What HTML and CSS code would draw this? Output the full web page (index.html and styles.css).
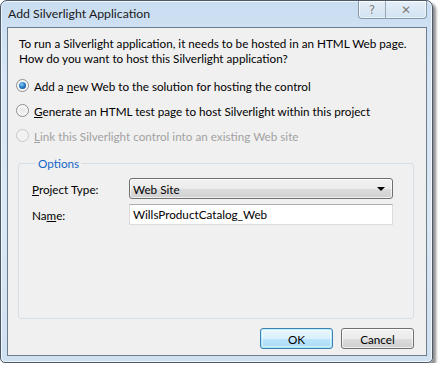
FILE: index.html
```html
<!DOCTYPE html>
<html>
<head>
<meta charset="utf-8">
<link rel="stylesheet" href="styles.css">
</head>
<body>
<div class="window">
  <div class="titlebar">
    <span class="title">Add Silverlight Application</span>
    <div class="caption-btns">
      <span class="cb help">?</span>
      <span class="cb close">✕</span>
    </div>
  </div>
  <div class="client">
    <p class="intro">To run a Silverlight application, it needs to be hosted in an HTML Web page.<br>How do you want to host this Silverlight application?</p>
    <div class="radios">
      <div class="radio checked"><span class="circle"><span class="dot"></span></span><span>Add a <u>n</u>ew Web to the solution for hosting the control</span></div>
      <div class="radio"><span class="circle"></span><span><u>G</u>enerate an HTML test page to host Silverlight within this project</span></div>
      <div class="radio disabled"><span class="circle"></span><span><u>L</u>ink this Silverlight control into an existing Web site</span></div>
    </div>
    <fieldset class="group">
      <legend>Options</legend>
      <div class="row">
        <span class="lbl"><u>P</u>roject Type:</span>
        <div class="combo"><span>Web Site</span><span class="arrow"></span></div>
      </div>
      <div class="row">
        <span class="lbl">Na<u>m</u>e:</span>
        <div class="textbox">WillsProductCatalog_Web</div>
      </div>
    </fieldset>
    <div class="buttons">
      <button class="btn default">OK</button>
      <button class="btn">Cancel</button>
    </div>
  </div>
</div>
</body>
</html>
```

FILE: styles.css
```css
html, body {
  margin: 0;
  padding: 0;
  background: #ffffff;
}
body {
  font-family: Lato, "Noto Sans", sans-serif;
  font-size: 11.7px;
  color: #000;
  white-space: nowrap;
}
.window {
  box-sizing: border-box;
  width: 433px;
  height: 363px;
  border: 1px solid #4a5868;
  border-radius: 7px 7px 5px 5px;
  background: linear-gradient(180deg, #c9ddf1 0%, #d6e6f6 20%, #dbe8f5 60%, #cfe0f1 100%);
  box-shadow: 3px 3px 3px rgba(0,0,0,0.45), inset 0 0 0 1px rgba(255,255,255,0.7);
  display: flex;
  flex-direction: column;
}
.titlebar {
  height: 26px;
  display: flex;
  align-items: flex-start;
  justify-content: space-between;
}
.title {
  padding: 5px 0 0 7px;
  line-height: 16px;
  font-size: 12.3px;
  color: #1a1a1a;
}
.caption-btns {
  display: flex;
  margin-right: 5px;
  height: 17px;
  border: 1px solid #8a99a8;
  border-top: none;
  border-radius: 0 0 4px 4px;
  background: linear-gradient(180deg, rgba(255,255,255,0.5), rgba(220,232,245,0.4));
  box-shadow: inset 0 0 0 1px rgba(255,255,255,0.6);
}
.cb {
  display: flex;
  align-items: center;
  justify-content: center;
  height: 17px;
  color: #7a7a7a;
  font-family: "DejaVu Sans", sans-serif;
  text-shadow: 0 0 1px #fff;
}
.help {
  width: 26px;
  font-size: 12px;
  border-right: 1px solid #9aa8b6;
}
.close {
  width: 40px;
  font-size: 12px;
}
.client {
  box-sizing: border-box;
  margin: 0 5px 0 6px;
  height: 329px;
  border: 1px solid #6d7c8b;
  background: #f0f0f0;
  display: flex;
  flex-direction: column;
}
.intro {
  margin: 0;
  padding: 8px 0 0 11px;
  line-height: 15px;
}
.radios {
  margin-top: 7px;
  display: flex;
  flex-direction: column;
}
.radio {
  height: 25px;
  display: flex;
  align-items: center;
  padding-left: 8px;
  gap: 5px;
}
.circle {
  box-sizing: border-box;
  width: 13px;
  height: 13px;
  border-radius: 50%;
  border: 1px solid #8e8f8f;
  background: radial-gradient(circle at 50% 50%, #e6e6e6 0%, #f4f4f4 50%, #ffffff 100%);
  display: flex;
  align-items: center;
  justify-content: center;
}
.dot {
  width: 7px;
  height: 7px;
  border-radius: 50%;
  background: radial-gradient(circle at 40% 35%, #8fd0f5 0%, #2a7fc9 45%, #123f86 100%);
}
.disabled {
  color: #a2a2a2;
}
.disabled .circle {
  border-color: #c8c8c8;
  background: #f2f2f2;
}
.group {
  box-sizing: border-box;
  margin: 8px 0 0 10px;
  width: 396px;
  height: 163px;
  border: 1px solid #d5dfe5;
  border-radius: 3px;
  padding: 7px 12px 0 13px;
}
.group legend {
  color: #1565c8;
  padding: 0 2px;
  margin-left: 4px;
  line-height: 15px;
}
.row {
  display: flex;
  align-items: center;
  margin-bottom: 5px;
}
.lbl {
  width: 97px;
}
.combo {
  box-sizing: border-box;
  width: 264px;
  height: 21px;
  border: 1px solid #707070;
  border-radius: 3px;
  background: linear-gradient(180deg, #f2f2f2 0%, #ebebeb 50%, #dddddd 51%, #cfcfcf 100%);
  box-shadow: inset 0 0 0 1px rgba(255,255,255,0.7);
  display: flex;
  align-items: center;
  justify-content: space-between;
  padding: 0 7px 0 3px;
}
.arrow {
  width: 0;
  height: 0;
  border-left: 4px solid transparent;
  border-right: 4px solid transparent;
  border-top: 4px solid #000;
}
.textbox {
  box-sizing: border-box;
  width: 264px;
  height: 21px;
  border: 1px solid #dcdcdc;
  border-top-color: #abadb3;
  background: #fff;
  padding: 0 3px;
  line-height: 19px;
}
.buttons {
  display: flex;
  justify-content: flex-end;
  gap: 8px;
  margin: 9px 12px 0 0;
}
.btn {
  box-sizing: border-box;
  width: 73px;
  height: 21px;
  font: inherit;
  color: #000;
  border: 1px solid #707070;
  border-radius: 3px;
  background: linear-gradient(180deg, #f2f2f2 0%, #ebebeb 50%, #dddddd 51%, #cfcfcf 100%);
  box-shadow: inset 0 0 0 1px rgba(255,255,255,0.7);
  padding: 0;
}
.btn.default {
  border-color: #3c7fb1;
  background: linear-gradient(180deg, #eaf6fd 0%, #d9f0fc 50%, #bee6fd 51%, #a7d9f5 100%);
  box-shadow: inset 0 0 0 1px #48d8fb55, inset 0 0 0 2px rgba(255,255,255,0.5);
}
```
